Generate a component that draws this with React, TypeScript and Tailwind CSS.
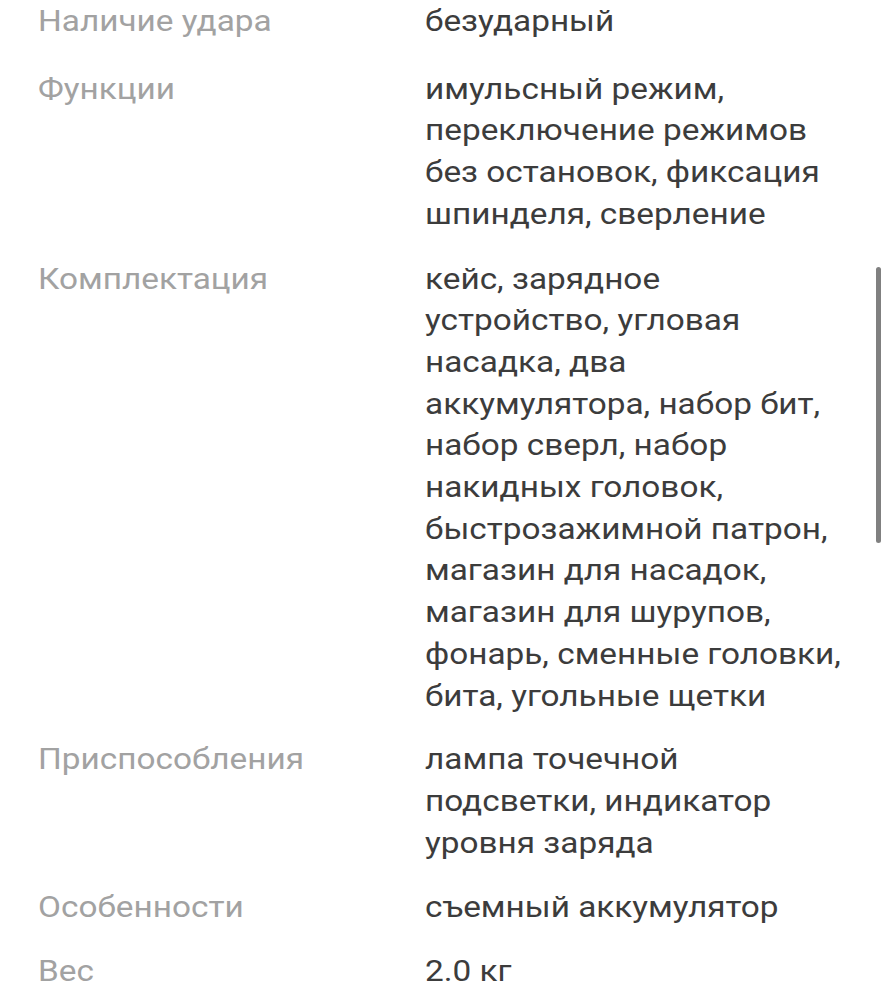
import React from 'react';

type Spec = { label: string; lines: string[]; extra?: string };

const specs: Spec[] = [
  { label: 'Наличие удара', lines: ['безударный'], extra: 'mb-[4px]' },
  {
    label: 'Функции',
    lines: ['имульсный режим,', 'переключение режимов', 'без остановок, фиксация', 'шпинделя, сверление'],
    extra: 'mb-[1px]',
  },
  {
    label: 'Комплектация',
    lines: [
      'кейс, зарядное',
      'устройство, угловая',
      'насадка, два',
      'аккумулятора, набор бит,',
      'набор сверл, набор',
      'накидных головок,',
      'быстрозажимной патрон,',
      'магазин для насадок,',
      'магазин для шурупов,',
      'фонарь, сменные головки,',
      'бита, угольные щетки',
    ],
  },
  { label: 'Приспособления', lines: ['лампа точечной', 'подсветки, индикатор', 'уровня заряда'], extra: 'mb-[1px]' },
  { label: 'Особенности', lines: ['съемный аккумулятор'] },
  { label: 'Вес', lines: ['2.0 кг'] },
];

const App: React.FC = () => {
  return (
    <div className="relative w-[888px] h-[1000px] overflow-hidden bg-white font-['Roboto',sans-serif]">
      <div className="flex flex-col gap-[22px] pt-[1px] pl-[38px] text-[29.5px] leading-[41.7px]">
        {specs.map((s) => (
          <div key={s.label} className={`flex ${s.extra ?? ''}`}>
            <div className="w-[387px] shrink-0">
              <div className="origin-left scale-x-[1.13] whitespace-nowrap text-[#a2a2a2]">{s.label}</div>
            </div>
            <div className="origin-left scale-x-[1.13] whitespace-nowrap text-[#3c3c3c]">
              {s.lines.map((l) => (
                <div key={l}>{l}</div>
              ))}
            </div>
          </div>
        ))}
      </div>

      {/* scroll indicator */}
      <div className="absolute left-[876px] top-[267px] w-[5px] h-[276px] rounded-full bg-[#808080]" />
    </div>
  );
};

export default App;
